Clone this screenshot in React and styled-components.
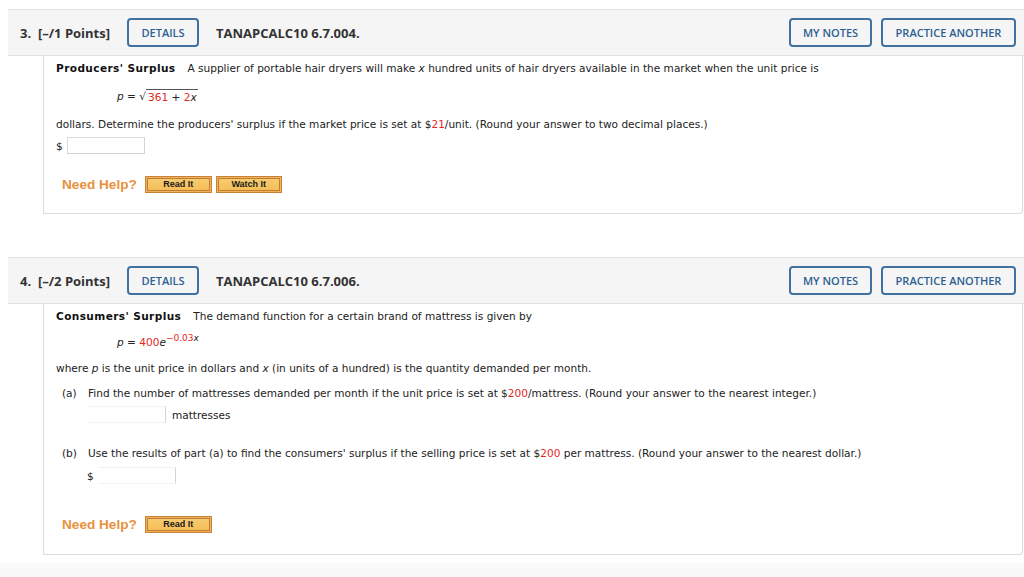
import React from "react";
import styled, { createGlobalStyle } from "styled-components";

const GlobalStyle = createGlobalStyle`
  html, body { margin: 0; padding: 0; background: #ffffff; }
  body {
    font-family: "DejaVu Sans", Verdana, sans-serif;
    font-size: 10.55px;
    color: #222;
  }
  * { box-sizing: border-box; }
`;

const Page = styled.div`
  height: 577px;
  overflow: hidden;
  padding-top: 9px;
`;

const Question = styled.section`
  margin-bottom: ${(p) => p.$gap || 0}px;
`;

const Header = styled.div`
  display: flex;
  align-items: center;
  height: 47px;
  margin-left: 8px;
  padding: 0 8px 0 12px;
  background: #f5f5f5;
  border-top: 1px solid #e1e1e1;
  border-bottom: 1px solid #e1e1e1;
  font-family: "Open Sans", "Liberation Sans", sans-serif;
`;

const Points = styled.span`
  font-size: 13px;
  font-weight: 700;
  color: #333;
  white-space: pre;
`;

const OutlineBtn = styled.button`
  height: 29px;
  width: ${(p) => p.$w}px;
  margin-left: ${(p) => p.$ml || 0}px;
  padding: 0;
  border: 2px solid #40719f;
  border-radius: 4px;
  background: transparent;
  color: #2d5f92;
  font-family: "Open Sans", "Liberation Sans", sans-serif;
  font-size: 11px;
  font-weight: 600;
`;

const Code = styled.span`
  margin-left: 17px;
  font-size: 13px;
  font-weight: 700;
  color: #333;
`;

const Spacer = styled.div`
  flex: 1;
`;

const Card = styled.div`
  margin-left: 43px;
  margin-right: 1px;
  border: 1px solid #dcdcdc;
  border-top: none;
  border-bottom-right-radius: 4px;
  padding: 4px 12px ${(p) => p.$pb || 20}px 12px;
`;

const Line = styled.div`
  line-height: 16px;
  height: 16px;
  margin-top: ${(p) => p.$mt || 0}px;
  padding-left: ${(p) => p.$pl || 0}px;
  white-space: nowrap;
  display: flex;
  align-items: center;
`;

const Text = styled.span`
  white-space: pre;
`;

const Topic = styled.span`
  font-weight: 700;
  color: #111;
  letter-spacing: 0.4px;
  margin-right: 12px;
`;

const Red = styled.span`
  color: #e4281d;
`;

const I = styled.i`
  font-style: italic;
`;

const Radicand = styled.span`
  display: inline-block;
  border-top: 1px solid #555;
  line-height: 12px;
  padding: 1px 1px 0 2px;
`;

const Sup = styled.sup`
  font-size: 9px;
  vertical-align: 5px;
  line-height: 0;
`;

const Row = styled.div`
  display: flex;
  align-items: center;
  height: 17px;
  margin-top: ${(p) => p.$mt || 0}px;
  padding-left: ${(p) => p.$pl || 0}px;
`;

const Answer = styled.input`
  width: 78px;
  height: 17px;
  margin: 0 ${(p) => p.$mr || 0}px 0 ${(p) => p.$ml || 0}px;
  padding: 0;
  background: #fff;
  border: 1px solid #d4d4d4;
  border-top-color: ${(p) => (p.$faint ? "#f2f2f2" : "#dadada")};
  border-left-color: ${(p) => (p.$faint ? "#ffffff" : "#dadada")};
  border-bottom-color: ${(p) => (p.$faint ? "#f4f4f4" : "#d4d4d4")};
  border-radius: 0;
  outline: none;
`;

const PartLabel = styled.span`
  width: 26px;
  flex: none;
`;

const HelpRow = styled.div`
  display: flex;
  align-items: center;
  gap: 4px;
  height: 17px;
  margin-top: ${(p) => p.$mt || 0}px;
  padding-left: 6px;
`;

const NeedHelp = styled.span`
  font-family: "Liberation Sans", Arial, sans-serif;
  font-weight: 700;
  font-size: 13.6px;
  color: #e8913d;
  margin-right: 4px;
`;

const HelpBtn = styled.button`
  width: ${(p) => p.$w}px;
  height: 17px;
  padding: 0;
  border: 1px solid #c7823a;
  background: linear-gradient(#f8cd72, #f4bd55);
  box-shadow: inset 0 0 0 1px #f2b25c, inset 0 0 0 2px #bf7d36;
  font-family: "Liberation Sans", Arial, sans-serif;
  font-weight: 700;
  font-size: 9px;
  color: #1a1a1a;
  line-height: 15px;
`;

const FooterBand = styled.div`
  margin-top: 8px;
  height: 20px;
  background: linear-gradient(#fafafa, #f6f6f6);
`;

function QHeader({ num, pts, code }) {
  return (
    <Header>
      <Points>{`${num}.  [–/${pts} Points]`}</Points>
      <OutlineBtn $w={72} $ml={17}>DETAILS</OutlineBtn>
      <Code>{code}</Code>
      <Spacer />
      <OutlineBtn $w={83}>MY NOTES</OutlineBtn>
      <OutlineBtn $w={135} $ml={9}>PRACTICE ANOTHER</OutlineBtn>
    </Header>
  );
}

export default function App() {
  return (
    <>
      <GlobalStyle />
      <Page>
        <Question $gap={43}>
          <QHeader num={3} pts={1} code="TANAPCALC10 6.7.004." />
          <Card>
            <Line>
              <Topic>Producers' Surplus</Topic>
              <Text>
                A supplier of portable hair dryers will make <I>x</I> hundred units of hair dryers available in the market when the unit price is
              </Text>
            </Line>
            <Line $mt={12} $pl={61}>
              <Text>
                <I>p</I> = √
              </Text>
              <Radicand>
                <Red>361</Red> + <Red>2</Red>
                <I>x</I>
              </Radicand>
            </Line>
            <Line $mt={12}>
              <Text>
                dollars. Determine the producers' surplus if the market price is set at $<Red>21</Red>/unit. (Round your answer to two decimal places.)
              </Text>
            </Line>
            <Row $mt={5}>
              <Text>$</Text>
              <Answer $ml={4} />
            </Row>
            <HelpRow $mt={22}>
              <NeedHelp>Need Help?</NeedHelp>
              <HelpBtn $w={67}>Read It</HelpBtn>
              <HelpBtn $w={66}>Watch It</HelpBtn>
            </HelpRow>
          </Card>
        </Question>

        <Question>
          <QHeader num={4} pts={2} code="TANAPCALC10 6.7.006." />
          <Card $pb={21}>
            <Line>
              <Topic>Consumers' Surplus</Topic>
              <Text>The demand function for a certain brand of mattress is given by</Text>
            </Line>
            <Line $mt={10} $pl={61}>
              <Text>
                <I>p</I> = <Red>400</Red>
                <I>e</I>
                <Sup>
                  <Red>−0.03</Red>
                  <I>x</I>
                </Sup>
              </Text>
            </Line>
            <Line $mt={10}>
              <Text>
                where <I>p</I> is the unit price in dollars and <I>x</I> (in units of a hundred) is the quantity demanded per month.
              </Text>
            </Line>
            <Line $mt={9} $pl={6}>
              <PartLabel>(a)</PartLabel>
              <Text>
                Find the number of mattresses demanded per month if the unit price is set at $<Red>200</Red>/mattress. (Round your answer to the nearest integer.)
              </Text>
            </Line>
            <Row $mt={5} $pl={32}>
              <Answer $faint $mr={6} />
              <Text>mattresses</Text>
            </Row>
            <Line $mt={22} $pl={6}>
              <PartLabel>(b)</PartLabel>
              <Text>
                Use the results of part (a) to find the consumers' surplus if the selling price is set at $<Red>200</Red> per mattress. (Round your answer to the nearest dollar.)
              </Text>
            </Line>
            <Row $mt={6} $pl={31}>
              <Text>$</Text>
              <Answer $faint $ml={4} />
            </Row>
            <HelpRow $mt={32}>
              <NeedHelp>Need Help?</NeedHelp>
              <HelpBtn $w={67}>Read It</HelpBtn>
            </HelpRow>
          </Card>
        </Question>
        <FooterBand />
      </Page>
    </>
  );
}
